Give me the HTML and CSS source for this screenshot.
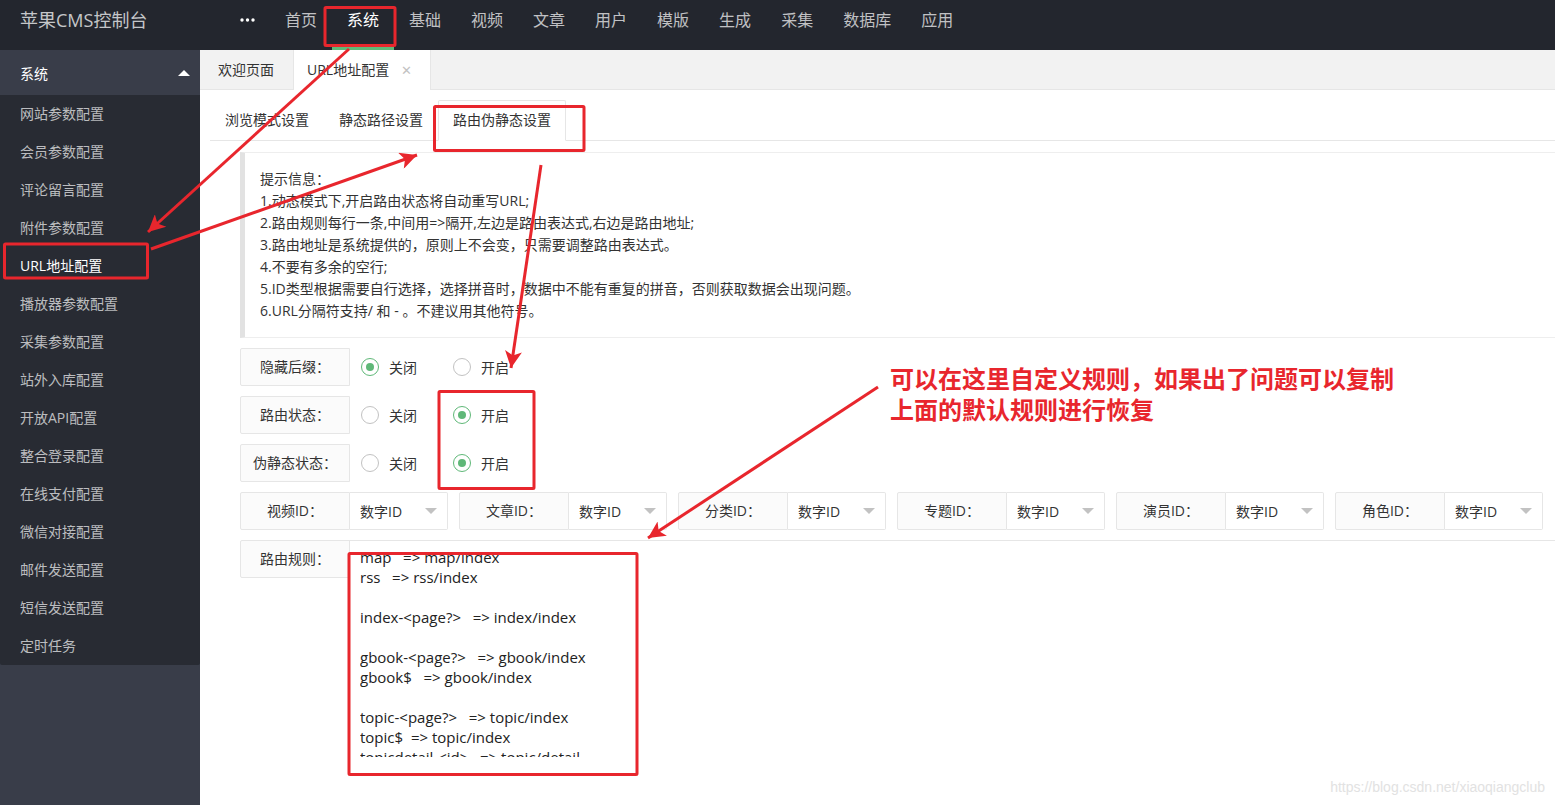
FILE: index.html
```html
<!DOCTYPE html>
<html lang="zh-CN">
<head>
<meta charset="utf-8">
<title>苹果CMS控制台</title>
<link rel="stylesheet" href="styles.css">
</head>
<body>
<header class="topbar">
  <div class="logo">苹果CMS控制台</div>
  <ul class="topnav">
    <li class="more"><svg width="15" height="4" viewBox="0 0 15 4"><circle cx="2" cy="2" r="1.7" fill="#fff"/><circle cx="7.5" cy="2" r="1.7" fill="#fff"/><circle cx="13" cy="2" r="1.7" fill="#fff"/></svg></li>
    <li>首页</li>
    <li class="active">系统</li>
    <li>基础</li>
    <li>视频</li>
    <li>文章</li>
    <li>用户</li>
    <li>模版</li>
    <li>生成</li>
    <li>采集</li>
    <li>数据库</li>
    <li>应用</li>
  </ul>
</header>
<div class="layout">
  <aside class="sidebar">
    <div class="side-head"><span>系统</span><span class="caret"></span></div>
    <ul class="side-list">
      <li>网站参数配置</li>
      <li>会员参数配置</li>
      <li>评论留言配置</li>
      <li>附件参数配置</li>
      <li class="current">URL地址配置</li>
      <li>播放器参数配置</li>
      <li>采集参数配置</li>
      <li>站外入库配置</li>
      <li>开放API配置</li>
      <li>整合登录配置</li>
      <li>在线支付配置</li>
      <li>微信对接配置</li>
      <li>邮件发送配置</li>
      <li>短信发送配置</li>
      <li>定时任务</li>
    </ul>
  </aside>
  <main class="main">
    <ul class="page-tabs">
      <li>欢迎页面</li>
      <li class="on">URL地址配置<span class="close">✕</span></li>
    </ul>
    <div class="content">
      <ul class="sub-tabs">
        <li>浏览模式设置</li>
        <li>静态路径设置</li>
        <li class="on">路由伪静态设置</li>
      </ul>
      <div class="tab-body">
        <div class="tip">
          <p>提示信息：</p>
          <p>1.动态模式下,开启路由状态将自动重写URL;</p>
          <p>2.路由规则每行一条,中间用=&gt;隔开,左边是路由表达式,右边是路由地址;</p>
          <p>3.路由地址是系统提供的，原则上不会变，只需要调整路由表达式。</p>
          <p>4.不要有多余的空行;</p>
          <p>5.ID类型根据需要自行选择，选择拼音时，数据中不能有重复的拼音，否则获取数据会出现问题。</p>
          <p>6.URL分隔符支持/ 和 - 。不建议用其他符号。</p>
        </div>

        <div class="form-item">
          <div class="label">隐藏后缀：</div>
          <div class="radios">
            <span class="radio checked"><i class="radio-icon"></i>关闭</span>
            <span class="radio"><i class="radio-icon"></i>开启</span>
          </div>
        </div>
        <div class="form-item">
          <div class="label">路由状态：</div>
          <div class="radios">
            <span class="radio"><i class="radio-icon"></i>关闭</span>
            <span class="radio checked"><i class="radio-icon"></i>开启</span>
          </div>
        </div>
        <div class="form-item">
          <div class="label">伪静态状态：</div>
          <div class="radios">
            <span class="radio"><i class="radio-icon"></i>关闭</span>
            <span class="radio checked"><i class="radio-icon"></i>开启</span>
          </div>
        </div>

        <div class="select-row">
          <div class="sel-group"><div class="label">视频ID：</div><div class="sel"><span>数字ID</span><i class="arrow"></i></div></div>
          <div class="sel-group"><div class="label">文章ID：</div><div class="sel"><span>数字ID</span><i class="arrow"></i></div></div>
          <div class="sel-group"><div class="label">分类ID：</div><div class="sel"><span>数字ID</span><i class="arrow"></i></div></div>
          <div class="sel-group"><div class="label">专题ID：</div><div class="sel"><span>数字ID</span><i class="arrow"></i></div></div>
          <div class="sel-group"><div class="label">演员ID：</div><div class="sel"><span>数字ID</span><i class="arrow"></i></div></div>
          <div class="sel-group"><div class="label">角色ID：</div><div class="sel"><span>数字ID</span><i class="arrow"></i></div></div>
        </div>

        <div class="form-item ta-row">
          <div class="label">路由规则：</div>
          <div class="ta">
            <div class="ta-view">
<div class="ta-lines">map   =&gt; map/index
rss   =&gt; rss/index

index-&lt;page?&gt;   =&gt; index/index

gbook-&lt;page?&gt;   =&gt; gbook/index
gbook$   =&gt; gbook/index

topic-&lt;page?&gt;   =&gt; topic/index
topic$  =&gt; topic/index
topicdetail-&lt;id&gt;   =&gt; topic/detail
topicdetail$   =&gt; topic/detail</div>
            </div>
          </div>
        </div>
      </div>
    </div>
  </main>
</div>

<svg class="annot" width="1555" height="805" viewBox="0 0 1555 805">
  <defs>
    <marker id="ah" viewBox="0 0 10 10" refX="10" refY="5" markerUnits="userSpaceOnUse" markerWidth="24" markerHeight="17" orient="auto">
      <path d="M0,0 L10,5 L0,10 L2.5,5 z" fill="#e8262d"/>
    </marker>
  </defs>
  <g fill="none" stroke="#e8262d" stroke-width="3">
    <rect x="325" y="7.5" width="70" height="38" rx="1"/>
    <rect x="4.5" y="244" width="143" height="34" rx="1"/>
    <rect x="434.5" y="106.5" width="149.5" height="44" rx="1"/>
    <rect x="439" y="391.5" width="95" height="97" rx="1"/>
    <rect x="349" y="553.5" width="288" height="221" rx="1"/>
    <line x1="349" y1="49" x2="148" y2="232" marker-end="url(#ah)"/>
    <line x1="151" y1="249" x2="417" y2="155" marker-end="url(#ah)"/>
    <line x1="541" y1="165" x2="511" y2="368" marker-end="url(#ah)"/>
    <line x1="878" y1="387" x2="648" y2="538" marker-end="url(#ah)"/>
  </g>
</svg>
<div class="note">可以在这里自定义规则，如果出了问题可以复制<br>上面的默认规则进行恢复</div>
<div class="wm">https://blog.csdn.net/xiaoqiangclub</div>
</body>
</html>
```

FILE: styles.css
```css
* { box-sizing: border-box; margin: 0; padding: 0; }
html, body { width: 1555px; height: 805px; overflow: hidden; }
body {
  font-family: "Open Sans", "Noto Sans CJK SC", sans-serif;
  font-size: 14px;
  color: #333;
  background: #fff;
  position: relative;
}
ul { list-style: none; }
i { font-style: normal; }

/* top bar */
.topbar { height: 50px; background: #23262e; display: flex; }
.logo {
  width: 200px; flex: none; padding-left: 20px;
  font-size: 18px; line-height: 40px; color: #c5c6c9;
}
.topnav { display: flex; margin-left: 25px; }
.topnav li {
  position: relative; height: 50px; padding: 0 15px;
  font-size: 16px; line-height: 40px; color: rgba(255,255,255,.72);
}
.topnav li.active { color: #fff; }
.topnav li.active::after {
  content: ""; position: absolute; left: 0; right: 0; bottom: 0;
  height: 4px; background: #5fb878;
}
.topnav .more svg { display: block; margin-top: 18px; }

/* layout */
.layout { display: flex; height: 755px; }
.sidebar { width: 200px; flex: none; background: #393d49; }
.side-head {
  height: 45px; padding: 0 10px 0 20px;
  display: flex; align-items: center; justify-content: space-between;
  color: #fff;
}
.caret {
  width: 0; height: 0;
  border-left: 6px solid transparent; border-right: 6px solid transparent;
  border-bottom: 6px solid #fff;
}
.side-list { background: #282b33; border-radius: 0 0 2px 2px; }
.side-list li {
  height: 38px; line-height: 38px; padding-left: 20px;
  color: rgba(255,255,255,.7);
}
.side-list li.current { color: #fff; }

.main { flex: 1; display: flex; flex-direction: column; min-width: 0; }

/* page tabs */
.page-tabs {
  height: 40px; background: #f2f2f2; display: flex;
  border-bottom: 1px solid #e6e6e6;
}
.page-tabs li { line-height: 39px; padding: 0 19px 0 18px; color: #333; }
.page-tabs li.on {
  background: #fff; height: 40px;
  border-left: 1px solid #e6e6e6; border-right: 1px solid #e6e6e6;
  padding: 0 18px 0 13px;
}
.close { color: #c2c2c2; margin-left: 12px; font-size: 13px; }

/* content */
.content { padding: 10px 10px 0 10px; }
.sub-tabs { display: flex; height: 41px; border-bottom: 1px solid #e6e6e6; margin-right: -10px; }
.sub-tabs li { padding: 0 15px; height: 40px; line-height: 40px; }
.sub-tabs li.on {
  height: 41px; line-height: 38px; padding: 0 14px;
  border: 1px solid #e6e6e6; border-bottom-color: #fff;
  border-radius: 2px 2px 0 0; background: #fff;
}
.tab-body { padding: 11px 0 0 30px; }

.tip {
  border: 1px solid #eee; border-left: 5px solid #e2e2e2; border-right: none;
  padding: 15px; line-height: 22px; margin: 0 -10px 10px 0;
}

/* form */
.form-item { display: flex; height: 38px; margin-bottom: 10px; }
.label {
  width: 110px; flex: none; height: 38px; line-height: 36px;
  border: 1px solid #e6e6e6; background: #fbfbfb;
  text-align: center; border-radius: 2px 0 0 2px;
}
.radios { display: flex; align-items: center; padding-left: 11px; }
.radio { display: flex; align-items: center; margin-right: 36px; }
.radio-icon {
  width: 18px; height: 18px; border-radius: 50%;
  border: 1px solid #c2c2c2; background: #fff; margin-right: 10px;
  display: flex; align-items: center; justify-content: center;
}
.radio.checked .radio-icon { border-color: #5fb878; }
.radio.checked .radio-icon::after {
  content: ""; width: 8px; height: 8px; border-radius: 50%; background: #5fb878;
}

.select-row { display: flex; gap: 11px; height: 38px; margin-bottom: 10px; }
.sel-group { display: flex; width: 208px; }
.sel {
  flex: 1; display: flex; align-items: center; justify-content: space-between;
  padding: 0 10px; border: 1px solid #e6e6e6; border-left: none;
  border-radius: 0 2px 2px 0; background: #fff;
}
.arrow {
  width: 0; height: 0;
  border-left: 6px solid transparent; border-right: 6px solid transparent;
  border-top: 6px solid #c2c2c2;
}

.ta-row { height: auto; margin-right: -10px; }
.ta {
  flex: 1; height: 235px; margin-left: -1px;
  border-top: 1px solid #e6e6e6; border-left: 1px solid #e6e6e6;
  background: #fff;
}
.ta-view { margin: 10px 0 0 10px; height: 206px; overflow: hidden; }
.ta-lines {
  margin-top: -4px; font-size: 15px; line-height: 20px;
  white-space: pre; color: #222;
}

/* annotations */
.annot { position: absolute; left: 0; top: 0; pointer-events: none; }
.note {
  position: absolute; left: 890px; top: 362px;
  font-family: "Noto Sans CJK SC", sans-serif;
  font-size: 24px; font-weight: 700; line-height: 31px; color: #e8262d;
}
.wm {
  position: absolute; right: 10px; top: 778px;
  font-family: "Liberation Sans", sans-serif;
  font-size: 14px; line-height: 18px; color: #e2e2e2;
}
```
